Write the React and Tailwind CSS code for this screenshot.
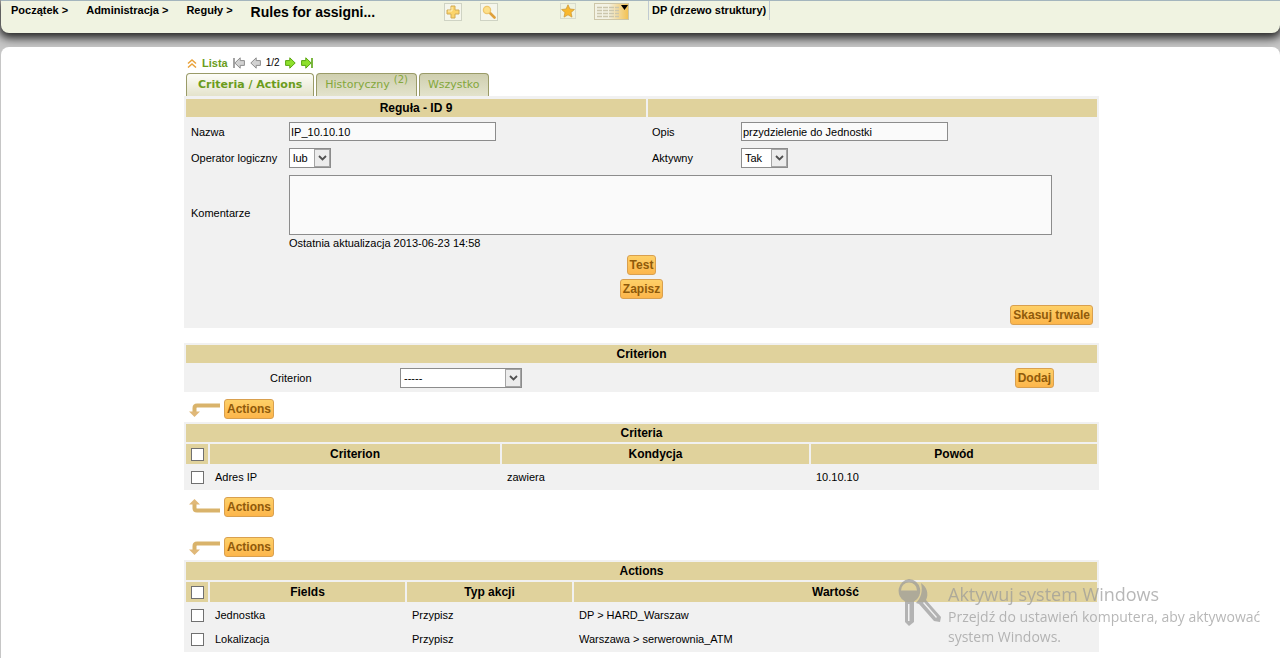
import React, { useState } from 'react';
import clsx from 'clsx';

const BREADCRUMBS = ['Początek', 'Administracja', 'Reguły'];

const CRITERIA = {
  title: 'Criteria',
  columns: [
    { label: 'Criterion', width: 'w-[290px]' },
    { label: 'Kondycja', width: 'w-[307px]' },
    { label: 'Powód', width: '' },
  ],
  rows: [['Adres IP', 'zawiera', '10.10.10']],
};

const ACTIONS = {
  title: 'Actions',
  columns: [
    { label: 'Fields', width: 'w-[195px]' },
    { label: 'Typ akcji', width: 'w-[165px]' },
    { label: 'Wartość', width: '' },
  ],
  rows: [
    ['Jednostka', 'Przypisz', 'DP > HARD_Warszaw'],
    ['Lokalizacja', 'Przypisz', 'Warszawa > serwerownia_ATM'],
  ],
};

const Button = ({ children, type = 'button' }) => (
  <button
    type={type}
    className="h-5 px-[2px] rounded-[3px] border border-[#d9a04f] bg-linear-to-b from-[#fed067] to-[#fcb54b] text-xs leading-4 font-bold text-[#8f5a0a] whitespace-nowrap"
  >
    {children}
  </button>
);

const Select = ({ id, options, className }) => (
  <div className={clsx('relative h-5', className)}>
    <select
      id={id}
      className="w-full h-full appearance-none border border-[#8c8c8c] bg-white pl-[3px] pr-5 text-[11px] leading-4 text-black"
    >
      {options.map((option) => (
        <option key={option}>{option}</option>
      ))}
    </select>
    <span className="pointer-events-none absolute inset-y-px right-px w-4 border border-[#a5a5a5] bg-[#ececec] flex items-center justify-center">
      <svg width="9" height="6" viewBox="0 0 9 6" fill="none" stroke="#505050" strokeWidth="1.8">
        <path d="M1 1l3.5 3.5L8 1" />
      </svg>
    </span>
  </div>
);

const Checkbox = ({ label }) => (
  <input
    type="checkbox"
    aria-label={label}
    className="block mx-auto size-[13px] appearance-none border border-[#707070] bg-white checked:bg-[#e0d29c]"
  />
);

const PagerArrow = ({ active, left, bar }) => (
  <svg width="12" height="12" viewBox="0 0 12 12" className={left ? '-scale-x-100' : ''}>
    <path
      d="M.6 3.600h4.200V.8L10.200 6 4.800 11.200V8.400H.6z"
      fill={active ? '#8ee02c' : '#d2d2d2'}
      stroke={active ? '#5aa512' : '#8d8d8d'}
      strokeLinejoin="round"
    />
    {bar && <path d="M11 1v10" stroke={active ? '#5aa512' : '#8d8d8d'} strokeWidth="1.6" />}
  </svg>
);

const MassActions = ({ up }) => (
  <div className="flex items-center gap-1 h-5 pl-[5px]">
    <svg width="31" height="18" viewBox="0 0 31 18" className={up ? '-scale-y-100' : ''}>
      <path d="M5.5 12V8Q5.5 5.500 8 5.500H31" fill="none" stroke="#d9b36b" strokeWidth="4" />
      <path d="M0 11.500H11L5.500 17z" fill="#e0b878" />
    </svg>
    <Button>Actions</Button>
  </div>
);

const RuleTable = ({ title, columns, rows }) => (
  <table className="w-full table-fixed border-separate border-spacing-[2px] bg-[#f1f1f1]">
    <colgroup>
      <col className="w-[22px]" />
      {columns.map((column) => (
        <col key={column.label} className={column.width} />
      ))}
    </colgroup>
    <thead>
      <tr className="h-[18px] bg-[#e0d29c]">
        <th colSpan={columns.length + 1} className="p-0 text-xs leading-4">{title}</th>
      </tr>
      <tr className="h-5">
        <th className="p-0 bg-[#e0d29c]">
          <Checkbox label={`${title}: zaznacz wszystko`} />
        </th>
        {columns.map((column) => (
          <th key={column.label} className="p-0 bg-[#e0d29c] text-xs leading-4">{column.label}</th>
        ))}
      </tr>
    </thead>
    <tbody>
      {rows.map((row) => (
        <tr key={row[0]} className="h-[22px]">
          <td className="p-0">
            <Checkbox label={row[0]} />
          </td>
          {row.map((cell) => (
            <td key={cell} className="py-0 px-[5px]">{cell}</td>
          ))}
        </tr>
      ))}
    </tbody>
  </table>
);

const TopBar = () => (
  <header className="relative flex items-start h-[33px] ml-px rounded-b-lg border-t border-[#a4b5bd] bg-[#f0f3e1] shadow-[0_3px_10px_2px_#222] font-bold">
    <nav className="flex items-start pl-[10px] gap-[18px] pt-[2px] leading-[14px]">
      {BREADCRUMBS.map((item) => (
        <a key={item} href="#" className="whitespace-nowrap">{item} &gt;</a>
      ))}
      <h1 className="text-sm leading-[18px] whitespace-nowrap">Rules for assigni...</h1>
    </nav>
    <div className="flex items-start pt-[2px] ml-[69px] gap-[18px]">
      <button type="button" aria-label="Dodaj" className="size-[18px] border border-[#cfd3c4] bg-[#f5f6ec] flex items-center justify-center">
        <svg width="14" height="14" viewBox="0 0 14 14">
          <path d="M5 1h4v4h4v4H9v4H5V9H1V5h4z" fill="#fbd46a" stroke="#d2ab55" strokeLinejoin="round" />
          <path d="M6 2v4H2" fill="none" stroke="#fff0bc" />
        </svg>
      </button>
      <button type="button" aria-label="Szukaj" className="size-[18px] border border-[#cfd3c4] bg-[#f5f6ec] flex items-center justify-center">
        <svg width="14" height="14" viewBox="0 0 14 14">
          <path d="M8 8l4.500 4.500" stroke="#dfa03a" strokeWidth="2.600" strokeLinecap="round" />
          <circle cx="5" cy="5" r="3.600" fill="#fde08a" stroke="#eec66c" strokeWidth="1.300" />
        </svg>
      </button>
    </div>
    <div className="flex items-start pt-[2px] ml-[62px] gap-[18px]">
      <button type="button" aria-label="Zakładki" className="size-4 border border-[#d8dbcd] flex items-center justify-center">
        <svg width="14" height="14" viewBox="0 0 14 14">
          <path d="M7 .8l1.900 4.200 4.500.5-3.400 3 1 4.600L7 10.800l-4 2.300 1-4.600-3.400-3L5.100 5z" fill="#f9b82e" stroke="#cf9a3a" strokeWidth=".8" />
        </svg>
      </button>
      <button type="button" aria-label="Załaduj widok" className="w-[35px] h-[17px] border border-[#cdc6a8]">
        <svg width="33" height="15" viewBox="0 0 33 15">
          <defs>
            <linearGradient id="view">
              <stop offset=".4" stopColor="#f3f2e4" />
              <stop offset="1" stopColor="#f3c254" />
            </linearGradient>
          </defs>
          <path d="M0 0h33v15H0z" fill="url(#view)" />
          <path d="M2 3.500h22M2 6.500h22M2 9.500h22M2 12.500h22" stroke="#cbc6ac" strokeWidth="1.400" strokeDasharray="5 1" />
          <path d="M26 1h7l-3.500 5z" fill="#000" />
        </svg>
      </button>
    </div>
    <a href="#" className="ml-[19px] h-[19px] px-[3px] pt-[2px] border-x border-[#c0cad2] leading-[14px] whitespace-nowrap">
      DP (drzewo struktury)
    </a>
  </header>
);

const Pager = () => (
  <nav className="flex items-center h-4 pl-[3px] text-[#6b9c1c]">
    <a href="#" className="flex items-center gap-[5px] font-bold">
      <svg width="10" height="9" viewBox="0 0 10 9" fill="none" stroke="#e9a23b" strokeWidth="1.500">
        <path d="M1 4.500l4-3.500 4 3.500M1 8.500l4-3.500 4 3.500" />
      </svg>
      Lista
    </a>
    <a href="#" aria-label="Pierwszy" className="ml-[5px]"><PagerArrow left bar /></a>
    <a href="#" aria-label="Poprzedni" className="ml-1"><PagerArrow left /></a>
    <span className="mx-[5px] text-[10px] text-black">1/2</span>
    <a href="#" aria-label="Następny"><PagerArrow active /></a>
    <a href="#" aria-label="Ostatni" className="ml-1"><PagerArrow active bar /></a>
  </nav>
);

const Tabs = () => {
  const [active, setActive] = useState('criteria');
  const tabs = [
    { id: 'criteria', label: 'Criteria / Actions' },
    { id: 'history', label: 'Historyczny', count: 2 },
    { id: 'all', label: 'Wszystko' },
  ];

  return (
    <div role="tablist" className="flex gap-[2px] mt-[2px] pl-[2px]">
      {tabs.map((tab) => (
        <button
          key={tab.id}
          type="button"
          role="tab"
          aria-selected={active === tab.id}
          onClick={() => setActive(tab.id)}
          className={clsx(
            "h-[23px] rounded-t-[4px] border border-b-0 border-[#9a9b68] bg-linear-to-b font-['DejaVu_Sans',Verdana,sans-serif] whitespace-nowrap",
            active === tab.id
              ? 'px-[11px] from-[#fdfdf8] to-[#e4e3cb] font-bold text-[#6b9c1c]'
              : 'px-2 from-[#cfcfaf] to-[#e3e3cc] text-[#83a73b]'
          )}
        >
          {tab.label}
          {tab.count && <sup className="ml-1 text-[10px]">({tab.count})</sup>}
        </button>
      ))}
    </div>
  );
};

const RuleForm = () => (
  <form className="bg-[#f1f1f1] pt-[3px] pb-[3px]">
    <div className="grid grid-cols-[460px_1fr] gap-[2px] px-[2px]">
      <h2 className="h-[18px] bg-[#e0d29c] text-center text-xs leading-[18px] font-bold">Reguła - ID 9</h2>
      <div className="bg-[#e0d29c]" />
    </div>
    <div className="grid grid-cols-[98px_363px_89px_1fr] items-center gap-y-[7px] px-[7px] pt-[5px]">
      <label htmlFor="name">Nazwa</label>
      <input id="name" defaultValue="IP_10.10.10" className="w-[207px] h-[19px] border border-[#8c8c8c] bg-[#fafafa] px-px" />
      <label htmlFor="description">Opis</label>
      <input id="description" defaultValue="przydzielenie do Jednostki" className="w-[207px] h-[19px] border border-[#8c8c8c] bg-[#fafafa] px-px" />
      <label htmlFor="operator">Operator logiczny</label>
      <Select id="operator" options={['lub', 'i']} className="w-[42px]" />
      <label htmlFor="enabled">Aktywny</label>
      <Select id="enabled" options={['Tak', 'Nie']} className="w-[47px]" />
      <label htmlFor="comment">Komentarze</label>
      <div className="col-span-3 pr-10">
        <textarea id="comment" className="block w-full h-[60px] resize-none border border-[#8c8c8c] bg-[#fafafa]" />
        <p className="pt-px leading-[14px]">Ostatnia aktualizacja 2013-06-23 14:58</p>
      </div>
    </div>
    <div className="flex flex-col items-center gap-1 pt-[5px]">
      <Button>Test</Button>
      <Button type="submit">Zapisz</Button>
    </div>
    <div className="flex justify-end pt-[6px] pr-[6px]">
      <Button>Skasuj trwale</Button>
    </div>
  </form>
);

const AddCriterion = () => (
  <form className="mt-[15px] bg-[#f1f1f1] p-[2px]">
    <h2 className="h-[18px] bg-[#e0d29c] text-center text-xs leading-[18px] font-bold">Criterion</h2>
    <div className="flex items-center h-[27px] pt-[2px] pr-[43px]">
      <label htmlFor="criterion" className="w-[214px] pl-[84px]">Criterion</label>
      <Select id="criterion" options={['-----']} className="w-[122px]" />
      <div className="ml-auto flex">
        <Button type="submit">Dodaj</Button>
      </div>
    </div>
  </form>
);

const ActivationNotice = () => (
  <aside className="pointer-events-none fixed bottom-[11px] right-3 flex gap-[7px] font-['Open_Sans',sans-serif] text-[#999] opacity-70">
    <svg width="44" height="48" viewBox="0 0 44 48" fill="currentColor" className="mt-[-2px]">
      <path d="M12 0a12 12 0 0 1 5 22.500V43l-5 4-4-4V22.500A12 12 0 0 1 12 0zM4 11.500h16a8 8 0 1 0-16 0zM11 25v17h1.500V25z" fillRule="evenodd" />
      <path d="M24 4c6 4 8 11 5 17l15 17-1 5-6-1-15-17-3-1c5-5 7-12 5-20zM26 24l13 15 1-1-13-15z" fillRule="evenodd" />
    </svg>
    <div>
      <p className="text-lg leading-[26px]">Aktywuj system Windows</p>
      <p className="w-[320px] text-sm leading-5">
        Przejdź do ustawień komputera, aby aktywować system Windows.
      </p>
    </div>
  </aside>
);

const App = () => (
  <div className="min-h-screen flex flex-col bg-[#c6c6c6] font-['Liberation_Sans',Arial,sans-serif] text-[11px] leading-[14px] text-black">
    <TopBar />
    <main className="relative grow mt-[14px] ml-px rounded-t-lg bg-white pl-[18px] pr-4 pt-2 pb-[6px]">
      <div className="w-full max-w-[915px] mx-auto">
        <Pager />
        <Tabs />
        <RuleForm />
        <AddCriterion />
        <div className="pt-[7px] pb-[3px]">
          <MassActions />
        </div>
        <RuleTable {...CRITERIA} />
        <div className="flex flex-col gap-5 pt-[7px] pb-[3px]">
          <MassActions up />
          <MassActions />
        </div>
        <RuleTable {...ACTIONS} />
      </div>
    </main>
    <ActivationNotice />
  </div>
);

export default App;
